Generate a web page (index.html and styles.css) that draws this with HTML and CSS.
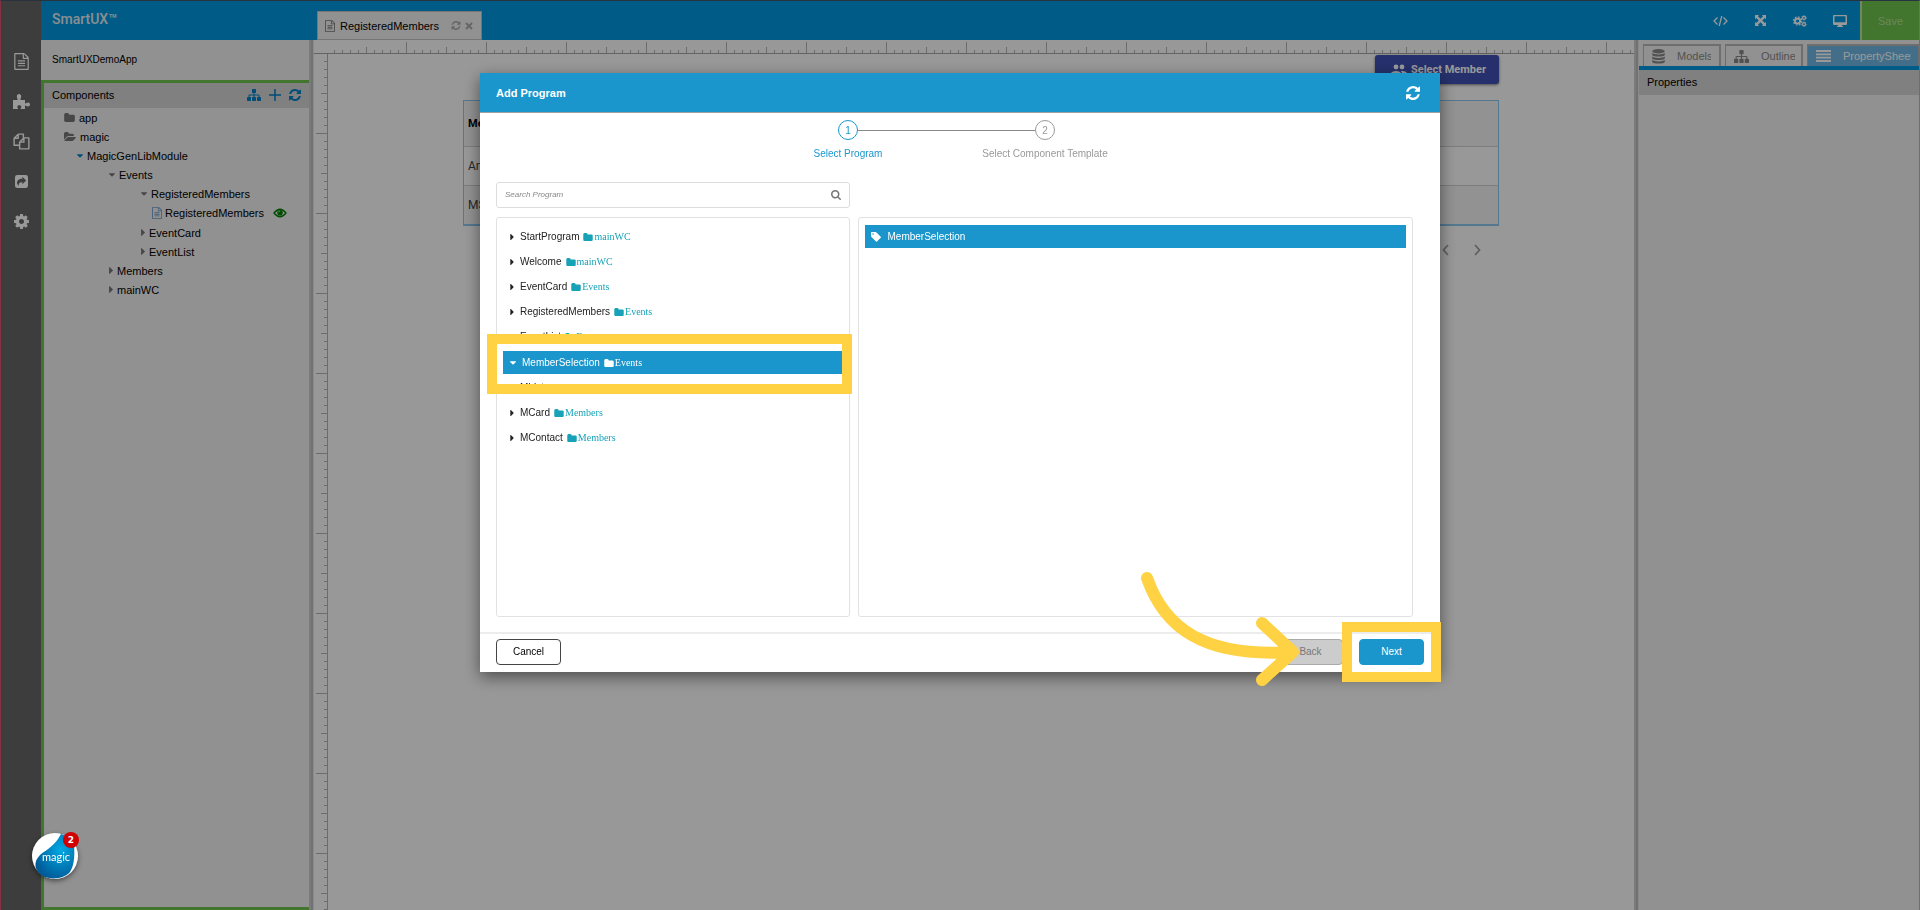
FILE: index.html
```html
<!DOCTYPE html>
<html lang="en">
<head>
    <meta charset="UTF-8">
    <meta name="viewport" content="width=device-width, initial-scale=1.0">
    <title>SmartUX</title>
    <link rel="stylesheet" href="styles.css">
</head>
<body>
    <!-- icons -->
    <svg class="sprite" aria-hidden="true">
        <symbol id="i-refresh" viewBox="128 128 1536 1536"><path d="M1639 1056q0 5-1 7-64 268-268 434.5t-478 166.5q-146 0-282.500-55t-243.500-157l-129 129q-19 19-45 19t-45-19-19-45v-448q0-26 19-45t45-19h448q26 0 45 19t19 45-19 45l-137 137q71 66 161 102t187 36q134 0 250-65t186-179q11-17 53-117 8-23 30-23h192q13 0 22.500 9.500t9.500 22.500zm25-800v448q0 26-19 45t-45 19h-448q-26 0-45-19t-19-45 19-45l138-138q-148-137-349-137-134 0-250 65t-186 179q-11 17-53 117-8 23-30 23h-199q-13 0-22.500-9.500t-9.500-22.500v-7q65-268 270-434.500t480-166.500q146 0 284 55.500t245 156.500l130-129q19-19 45-19t45 19 19 45z"/></symbol>
        <symbol id="i-right" viewBox="576 384 576 1024"><path d="M1152 896q0 26-19 45l-448 448q-19 19-45 19t-45-19-19-45v-896q0-26 19-45t45-19 45 19l448 448q19 19 19 45z"/></symbol>
        <symbol id="i-down" viewBox="384 640 1024 576"><path d="M1408 704q0 26-19 45l-448 448q-19 19-45 19t-45-19l-448-448q-19-19-19-45t19-45 45-19h896q26 0 45 19t19 45z"/></symbol>
        <symbol id="i-folder" viewBox="64 128 1664 1408"><path d="M1728 608v704q0 92-66 158t-158 66h-1216q-92 0-158-66t-66-158v-960q0-92 66-158t158-66h320q92 0 158 66t66 158v32h672q92 0 158 66t66 158z"/></symbol>
        <symbol id="i-folder-open" viewBox="0 128 1880 1408"><path d="M1879 952q0 31-31 66l-336 396q-43 51-120.500 86.500t-143.500 35.500h-1088q-34 0-60.500-13t-26.500-43q0-31 31-66l336-396q43-51 120.500-86.500t143.500-35.500h1088q34 0 60.500 13t26.500 43zm-343-344v160h-832q-94 0-197 47.500t-164 119.500l-337 396-5 6q0-4-.5-12.500t-.5-12.500v-960q0-92 66-158t158-66h320q92 0 158 66t66 158v32h544q92 0 158 66t66 158z"/></symbol>
        <symbol id="i-search" viewBox="64 128 1664 1664"><path d="M1216 832q0-185-131.500-316.500t-316.500-131.500-316.500 131.500-131.500 316.500 131.500 316.500 316.500 131.500 316.500-131.500 131.500-316.500zm512 832q0 52-38 90t-90 38q-54 0-90-38l-343-342q-179 124-399 124-143 0-273.500-55.500t-225-150-150-225-55.500-273.500 55.500-273.500 150-225 225-150 273.500-55.500 273.500 55.500 225 150 150 225 55.500 273.500q0 220-124 399l343 343q37 37 37 90z"/></symbol>
        <symbol id="i-file" viewBox="128 0 1536 1792"><path d="M1596 380q28 28 48 76t20 88v1152q0 40-28 68t-68 28h-1344q-40 0-68-28t-28-68v-1600q0-40 28-68t68-28h896q40 0 88 20t76 48zm-444-244v376h376q-10-29-22-41l-313-313q-12-12-41-22zm384 1528v-1024h-416q-40 0-68-28t-28-68v-416h-768v1536h1280zm-1024-864q0-14 9-23t23-9h704q14 0 23 9t9 23v64q0 14-9 23t-23 9h-704q-14 0-23-9t-9-23v-64zm736 224q14 0 23 9t9 23v64q0 14-9 23t-23 9h-704q-14 0-23-9t-9-23v-64q0-14 9-23t23-9h704zm0 256q14 0 23 9t9 23v64q0 14-9 23t-23 9h-704q-14 0-23-9t-9-23v-64q0-14 9-23t23-9h704z"/></symbol>
        <symbol id="i-cog" viewBox="128 128 1536 1536"><path d="M1152 896q0-106-75-181t-181-75-181 75-75 181 75 181 181 75 181-75 75-181zm512-109v222q0 12-8 23t-20 13l-185 28q-19 54-39 91 35 50 107 138 10 12 10 25t-9 23q-27 37-99 108t-94 71q-12 0-26-9l-138-108q-44 23-91 38-16 136-29 186-7 28-36 28h-222q-14 0-24.500-8.500t-11.500-21.500l-28-184q-49-16-90-37l-141 107q-10 9-25 9-14 0-25-11-126-114-165-168-7-10-7-23 0-12 8-23 15-21 51-66.500t54-70.500q-27-50-41-99l-183-27q-13-2-21-12.500t-8-23.500v-222q0-12 8-23t19-13l186-28q14-46 39-92-40-57-107-138-10-12-10-24 0-10 9-23 26-36 98.500-107.500t94.500-71.500q13 0 26 10l138 107q44-23 91-38 16-136 29-186 7-28 36-28h222q14 0 24.500 8.500t11.500 21.500l28 184q49 16 90 37l142-107q9-9 24-9 13 0 25 10 129 119 165 170 7 8 7 22 0 12-8 23-15 21-51 66.500t-54 70.500q26 50 41 98l183 28q13 2 21 12.500t8 23.500z"/></symbol>
        <symbol id="i-sitemap" viewBox="0 128 1792 1536"><path d="M1792 1248v320q0 40-28 68t-68 28h-320q-40 0-68-28t-28-68v-320q0-40 28-68t68-28h96v-192h-512v192h96q40 0 68 28t28 68v320q0 40-28 68t-68 28h-320q-40 0-68-28t-28-68v-320q0-40 28-68t68-28h96v-192h-512v192h96q40 0 68 28t28 68v320q0 40-28 68t-68 28h-320q-40 0-68-28t-28-68v-320q0-40 28-68t68-28h96v-192q0-52 38-90t90-38h512v-192h-96q-40 0-68-28t-28-68v-320q0-40 28-68t68-28h320q40 0 68 28t28 68v320q0 40-28 68t-68 28h-96v192h512q52 0 90 38t38 90v192h96q40 0 68 28t28 68z"/></symbol>
        <symbol id="i-puzzle" viewBox="0 0 18 16"><path d="M1 7h4.500C6 6 4.800 5.300 4.800 3.600 4.800 2 5.700 1 7 1s2.200 1 2.200 2.600C9.200 5.300 8 6 8.500 7H13v3.400c.8.500 1.500-.9 3-.9 1.200 0 2 .8 2 2s-.8 2-2 2c-1.500 0-2.200-1.300-3-.9V16H8.600c-.4-.8.700-1.200.7-2.300 0-.9-.8-1.500-2-1.500s-2 .6-2 1.500c0 1.100 1.100 1.500.7 2.300H1z"/></symbol>
        <symbol id="i-copy" viewBox="0 0 18 18"><path d="M5.500 1.200H11V5M5.500 1.200L1.200 5.500V13H6.500M5.500 1.200V5.500H1.200M11.500 5.200H16.800V16.800H7V9.700L11.500 5.200V9.700H7" fill="none" stroke="currentColor" stroke-width="1.500" stroke-linejoin="round"/></symbol>
        <symbol id="i-share" viewBox="0 0 14 14"><path fill-rule="evenodd" d="M2.500 0h9A2.500 2.500 0 0 1 14 2.500v9a2.500 2.500 0 0 1-2.500 2.500h-9A2.500 2.500 0 0 1 0 11.500v-9A2.500 2.500 0 0 1 2.500 0zM8 2v2C4 4 2 6 2.200 8.700c.1 1.300.8 2.300 1.800 3C3.500 9 5 7.800 8 7.800V10l4-4z"/></symbol>
        <symbol id="i-plus" viewBox="0 0 12 12"><path d="M6 0v12M0 6h12" stroke="currentColor" stroke-width="1.500"/></symbol>
        <symbol id="i-eye" viewBox="0 0 14 10"><path d="M1 5Q7-2.500 13 5 7 12.500 1 5z" fill="none" stroke="currentColor" stroke-width="1.300"/><circle cx="7" cy="4.700" r="2.800"/><path d="M5.600 4.500A1.500 1.500 0 0 1 7 3" fill="none" stroke="#fff" stroke-width=".7"/></symbol>
        <symbol id="i-close" viewBox="0 0 8 8"><path d="M1 1l6 6M7 1L1 7" stroke="currentColor" stroke-width="2"/></symbol>
        <symbol id="i-code" viewBox="0 0 15 12"><path d="M4.500 2.500L1 6l3.500 3.500M10.500 2.500L14 6l-3.500 3.500M8.800 1L6.200 11" fill="none" stroke="currentColor" stroke-width="1.300"/></symbol>
        <symbol id="i-expand" viewBox="0 0 12 12"><path d="M0 0h4.500L3.200 1.300 6 4.100l2.800-2.800L7.500 0H12v4.500l-1.300-1.300L7.900 6l2.800 2.800L12 7.500V12H7.500l1.300-1.300L6 7.900l-2.800 2.800L4.500 12H0V7.500l1.300 1.300L4.100 6 1.300 3.200 0 4.500z"/></symbol>
        <symbol id="i-cogs" viewBox="0 0 14 12"><g fill="none" stroke="currentColor"><circle cx="4.600" cy="6" r="2.600" stroke-width="2"/><circle cx="4.600" cy="6" r="4.100" stroke-width="1.200" stroke-dasharray="1.700 1.500"/><circle cx="11" cy="2.800" r="1.500" stroke-width="1.300"/><circle cx="11" cy="2.800" r="2.400" stroke-width=".8" stroke-dasharray="1 .9"/><circle cx="11" cy="9.200" r="1.500" stroke-width="1.300"/><circle cx="11" cy="9.200" r="2.400" stroke-width=".8" stroke-dasharray="1 .9"/></g></symbol>
        <symbol id="i-desktop" viewBox="0 0 14 12"><path fill-rule="evenodd" d="M1 0h12a1 1 0 0 1 1 1v8a1 1 0 0 1-1 1H9v1h1v1H4v-1h1v-1H1a1 1 0 0 1-1-1V1a1 1 0 0 1 1-1zm.5 1.300V7.300h11v-6z"/></symbol>
        <symbol id="i-users" viewBox="0 0 16 12"><circle cx="5" cy="3" r="2.400"/><circle cx="11" cy="3" r="2.400"/><path d="M0 12V9.500C0 8 2.500 7 5 7s5 1 5 2.500V12zM11 12V9.500c0-.9-.5-1.700-1.200-2.300 3-.5 6.200.6 6.200 2.300V12z"/></symbol>
        <symbol id="i-database" viewBox="0 0 13 15"><ellipse cx="6.500" cy="2.300" rx="6.300" ry="2.200"/><path d="M.2 4.100C1.500 5.900 11.500 5.900 12.800 4.100V6C11.800 8.100 1.200 8.100.2 6zM.2 7.600C1.500 9.400 11.500 9.400 12.800 7.600v1.900C11.800 11.600 1.200 11.600.2 9.500zM.2 11.100c1.300 1.800 11.300 1.800 12.600 0V13C11.800 15.100 1.200 15.100.2 13z"/></symbol>
        <symbol id="i-list" viewBox="0 0 15 12"><path d="M0 1h15M0 4.300h15M0 7.700h15M0 11h15" stroke="currentColor" stroke-width="1.800"/></symbol>
        <symbol id="i-tag" viewBox="0 0 10 10"><path fill-rule="evenodd" d="M.8 0H4.500q.5 0 1 .5L9.700 4.700q.5.500 0 1L6 9.500q-.5.500-1 0L.5 5Q0 4.500 0 4V.8Q0 0 .8 0zM2 1.200a.8.8 0 1 0 .1 1.600A.8.8 0 0 0 2 1.200z"/></symbol>
        <symbol id="i-prev" viewBox="0 0 7 12"><path d="M6 1L1.500 6 6 11" fill="none" stroke="currentColor" stroke-width="1.800"/></symbol>
        <symbol id="i-next" viewBox="0 0 7 12"><path d="M1 1l4.500 5L1 11" fill="none" stroke="currentColor" stroke-width="1.800"/></symbol>
    </svg>

    <div class="page">
        <nav class="rail">
            <button class="rail-btn" aria-label="Pages"><svg width="15" height="17"><use href="#i-file"/></svg></button>
            <button class="rail-btn" aria-label="Components"><svg width="18" height="16"><use href="#i-puzzle"/></svg></button>
            <button class="rail-btn" aria-label="Templates"><svg width="17" height="17"><use href="#i-copy"/></svg></button>
            <button class="rail-btn" aria-label="Export"><svg width="13" height="13"><use href="#i-share"/></svg></button>
            <button class="rail-btn" aria-label="Settings"><svg width="15" height="15"><use href="#i-cog"/></svg></button>
        </nav>

        <div class="main">
            <header class="topbar">
                <h1 class="brand">SmartUX™</h1>
                <div class="file-tab">
                    <svg width="10" height="12"><use href="#i-file"/></svg>
                    <span class="file-name">RegisteredMembers</span>
                    <button class="file-btn" aria-label="Reload"><svg width="10" height="9"><use href="#i-refresh"/></svg></button>
                    <button class="file-btn" aria-label="Close"><svg width="8" height="8"><use href="#i-close"/></svg></button>
                </div>
                <div class="tools">
                    <button class="tool" aria-label="Code"><svg width="15" height="12"><use href="#i-code"/></svg></button>
                    <button class="tool" aria-label="Full screen"><svg width="11" height="11"><use href="#i-expand"/></svg></button>
                    <button class="tool" aria-label="Options"><svg width="14" height="12"><use href="#i-cogs"/></svg></button>
                    <button class="tool" aria-label="Preview"><svg width="14" height="12"><use href="#i-desktop"/></svg></button>
                </div>
                <button class="save">Save</button>
            </header>

            <div class="columns">
                <aside class="sidebar">
                    <div class="app-name">SmartUXDemoApp</div>
                    <section class="components">
                        <div class="panel-head">
                            <h2>Components</h2>
                            <div class="head-actions">
                                <button aria-label="Tree"><svg width="14" height="12"><use href="#i-sitemap"/></svg></button>
                                <button aria-label="Add"><svg width="12" height="12"><use href="#i-plus"/></svg></button>
                                <button aria-label="Refresh"><svg width="12" height="12"><use href="#i-refresh"/></svg></button>
                            </div>
                        </div>
                        <ul class="tree">
                            <li><div class="node"><svg class="dim" width="11" height="9"><use href="#i-folder"/></svg>app</div></li>
                            <li>
                                <div class="node"><svg class="dim" width="12" height="9"><use href="#i-folder-open"/></svg>magic</div>
                                <ul class="level-module">
                                    <li>
                                        <div class="node"><svg class="blue" width="6" height="4"><use href="#i-down"/></svg>MagicGenLibModule</div>
                                        <ul>
                                            <li>
                                                <div class="node"><svg class="dim" width="6" height="4"><use href="#i-down"/></svg>Events</div>
                                                <ul>
                                                    <li>
                                                        <div class="node"><svg class="dim" width="6" height="4"><use href="#i-down"/></svg>RegisteredMembers</div>
                                                        <ul class="level-file">
                                                            <li><div class="node file"><svg class="page-icon" width="10" height="12"><use href="#i-file"/></svg>RegisteredMembers<svg class="eye" width="14" height="10"><use href="#i-eye"/></svg></div></li>
                                                        </ul>
                                                    </li>
                                                    <li><div class="node"><svg class="dim" width="4" height="7"><use href="#i-right"/></svg>EventCard</div></li>
                                                    <li><div class="node"><svg class="dim" width="4" height="7"><use href="#i-right"/></svg>EventList</div></li>
                                                </ul>
                                            </li>
                                            <li><div class="node"><svg class="dim" width="4" height="7"><use href="#i-right"/></svg>Members</div></li>
                                            <li><div class="node"><svg class="dim" width="4" height="7"><use href="#i-right"/></svg>mainWC</div></li>
                                        </ul>
                                    </li>
                                </ul>
                            </li>
                        </ul>
                    </section>
                </aside>

                <div class="splitter"></div>

                <main class="workspace">
                    <div class="ruler-corner"></div>
                    <div class="ruler-x"></div>
                    <div class="ruler-y"></div>
                    <div class="canvas">
                        <button class="select-member"><svg width="16" height="12"><use href="#i-users"/></svg>Select Member</button>
                        <table class="members">
                            <thead><tr><th>Member Name</th><th></th></tr></thead>
                            <tbody>
                                <tr><td>Angular</td><td></td></tr>
                                <tr><td>MSE</td><td></td></tr>
                            </tbody>
                        </table>
                        <div class="pager">
                            <button aria-label="Previous page"><svg width="7" height="12"><use href="#i-prev"/></svg></button>
                            <button aria-label="Next page"><svg width="7" height="12"><use href="#i-next"/></svg></button>
                        </div>
                    </div>
                </main>

                <div class="splitter"></div>

                <aside class="props">
                    <div class="prop-tabs">
                        <button class="prop-tab"><svg width="13" height="15"><use href="#i-database"/></svg><span>Models</span></button>
                        <button class="prop-tab"><svg width="15" height="13"><use href="#i-sitemap"/></svg><span>Outline</span></button>
                        <button class="prop-tab active"><svg width="15" height="12"><use href="#i-list"/></svg><span>PropertySheet</span></button>
                    </div>
                    <div class="panel-head"><h2>Properties</h2></div>
                </aside>
            </div>
        </div>
    </div>

    <!-- Add Program -->
    <div class="overlay">
        <div class="modal" role="dialog" aria-labelledby="modal-title">
            <div class="modal-head">
                <h2 id="modal-title">Add Program</h2>
                <button aria-label="Refresh"><svg width="14" height="14"><use href="#i-refresh"/></svg></button>
            </div>
            <ol class="steps">
                <li class="step current">
                    <div class="step-row"><i class="line hide"></i><span class="num">1</span><i class="line"></i></div>
                    <span class="step-label">Select Program</span>
                </li>
                <li class="step">
                    <div class="step-row"><i class="line"></i><span class="num">2</span><i class="line hide"></i></div>
                    <span class="step-label">Select Component Template</span>
                </li>
            </ol>
            <div class="modal-body">
                <div class="search">
                    <input type="text" placeholder="Search Program" aria-label="Search Program">
                    <svg width="10" height="10"><use href="#i-search"/></svg>
                </div>
                <ul class="box programs">
                    <li class="program"><svg class="caret" width="4" height="6"><use href="#i-right"/></svg>StartProgram<span class="tag"><svg width="10" height="8"><use href="#i-folder"/></svg>mainWC</span></li>
                    <li class="program"><svg class="caret" width="4" height="6"><use href="#i-right"/></svg>Welcome<span class="tag"><svg width="10" height="8"><use href="#i-folder"/></svg>mainWC</span></li>
                    <li class="program"><svg class="caret" width="4" height="6"><use href="#i-right"/></svg>EventCard<span class="tag"><svg width="10" height="8"><use href="#i-folder"/></svg>Events</span></li>
                    <li class="program"><svg class="caret" width="4" height="6"><use href="#i-right"/></svg>RegisteredMembers<span class="tag"><svg width="10" height="8"><use href="#i-folder"/></svg>Events</span></li>
                    <li class="program"><svg class="caret" width="4" height="6"><use href="#i-right"/></svg>EventList<span class="tag"><svg width="10" height="8"><use href="#i-folder"/></svg>Events</span></li>
                    <li class="program selected"><svg class="caret" width="6" height="4"><use href="#i-down"/></svg>MemberSelection<span class="tag"><svg width="10" height="8"><use href="#i-folder"/></svg>Events</span><span class="highlight"></span></li>
                    <li class="program"><svg class="caret" width="4" height="6"><use href="#i-right"/></svg>MList<span class="tag"><svg width="10" height="8"><use href="#i-folder"/></svg>Members</span></li>
                    <li class="program"><svg class="caret" width="4" height="6"><use href="#i-right"/></svg>MCard<span class="tag"><svg width="10" height="8"><use href="#i-folder"/></svg>Members</span></li>
                    <li class="program"><svg class="caret" width="4" height="6"><use href="#i-right"/></svg>MContact<span class="tag"><svg width="10" height="8"><use href="#i-folder"/></svg>Members</span></li>
                </ul>
                <ul class="box result">
                    <li class="result-item"><svg width="10" height="10"><use href="#i-tag"/></svg>MemberSelection</li>
                </ul>
            </div>
            <div class="modal-foot">
                <button class="btn cancel">Cancel</button>
                <div class="back-wrap">
                    <button class="btn back" disabled>Back</button>
                    <svg class="arrow" width="166" height="118" viewBox="0 0 166 118"><path d="M12 10C29 59 68 90 158 84M127 55L158 84 127 112" fill="none" stroke="#ffd243" stroke-width="12" stroke-linecap="round" stroke-linejoin="round"/></svg>
                </div>
                <div class="next-wrap">
                    <button class="btn next">Next</button>
                    <span class="highlight"></span>
                </div>
            </div>
        </div>
    </div>

    <button class="magic" aria-label="Magic help">
        <svg width="46" height="46" viewBox="0 0 46 46">
            <defs>
                <radialGradient id="drop" cx=".65" cy=".35" r=".7"><stop offset="0" stop-color="#00a9e4"/><stop offset="1" stop-color="#005b98"/></radialGradient>
            </defs>
            <circle cx="23" cy="23" r="23" fill="#fff"/>
            <path d="M29 1C23 13 15 16 8 22 0 30 3 40 13 44c9 3 20 1 25-5C44 30 42 15 42 8L37 4z" fill="url(#drop)"/>
            <text x="10" y="28" fill="#fff" font-family="Lato, sans-serif" font-size="11">magic</text>
        </svg>
        <span class="count">2</span>
    </button>
</body>
</html>
```
FILE: styles.css
```css
*{
    padding: 0;
    margin: 0;
    list-style: none;
    box-sizing: border-box;
}
html, body{
    width: 100%;
    height: 100%;
    overflow: hidden;
}
body{
    font: 11px/14px "Liberation Sans", Arial, sans-serif;
    color: #000;
}
button{
    border: 0;
    background: none;
    font: inherit;
    color: inherit;
}
svg{
    display: block;
    flex: none;
    fill: currentColor;
}
.sprite{
    position: absolute;
    width: 0;
    height: 0;
}

.page{
    display: flex;
    height: 100%;
    border: 1px solid #e0506e;
    border-top-color: #456;
    border-right-color: #b4b0e8;
    border-bottom: 0;
}
.rail{
    width: 40px;
    flex: none;
    padding-top: 40px;
    background: #666;
    color: #fff;
}
.rail-btn{
    display: flex;
    width: 100%;
    height: 40px;
    align-items: center;
    justify-content: center;
}
.main{
    flex: 1;
    min-width: 0;
    display: flex;
    flex-direction: column;
}

/* top bar */
.topbar{
    display: flex;
    height: 39px;
    flex: none;
    background: #0098e1;
    color: #fff;
}
.brand{
    width: 276px;
    padding-left: 11px;
    font: 500 14px/36px Roboto, sans-serif;
    color: #e4eef4;
}
.file-tab{
    display: flex;
    align-items: center;
    align-self: flex-end;
    gap: 4px;
    height: 29px;
    padding: 0 8px 0 7px;
    border: 1px solid #c4c4c4;
    background: #f2f2f2;
    color: #777;
}
.file-name{
    padding: 0 8px 0 1px;
    color: #000;
}
.file-btn{
    color: #aaa;
}
.tools{
    display: flex;
    margin-left: auto;
}
.tool{
    display: flex;
    width: 40px;
    align-items: center;
    justify-content: center;
}
.save{
    width: 59px;
    border-left: 2px solid #bfe0a8;
    background: #6ec34b;
    color: #b4e29c;
}

.columns{
    flex: 1;
    min-height: 0;
    display: flex;
}
.splitter{
    width: 5px;
    flex: none;
    border-right: 1px solid #e8e8e8;
    background: linear-gradient(90deg, #cdcdcd 2px, #bdbdbd 2px);
}

/* left panel */
.sidebar{
    width: 268px;
    flex: none;
    display: flex;
    flex-direction: column;
    background: #f2f2f2;
}
.app-name{
    height: 40px;
    padding-left: 11px;
    font-size: 10px;
    line-height: 40px;
}
.components{
    flex: 1;
    border: 3px solid #6ec34b;
    border-right: 0;
}
.panel-head{
    display: flex;
    align-items: center;
    justify-content: space-between;
    height: 25px;
    padding: 0 8px 1px;
    background: #d5d5d5;
}
.panel-head h2{
    font-size: 11px;
    font-weight: 400;
}
.head-actions{
    display: flex;
    gap: 8px;
    color: #0080c8;
}
.tree{
    padding-left: 20px;
}
.tree ul{
    padding-left: 32px;
}
.tree .level-module{
    padding-left: 13px;
}
.tree .level-file{
    padding-left: 11px;
}
.node{
    display: flex;
    align-items: center;
    gap: 4px;
    height: 19px;
}
.node.file{
    gap: 3px;
    height: 20px;
}
.dim{
    color: #777;
}
.blue{
    color: #0080c8;
}
.page-icon{
    color: #6a9ac8;
}
.eye{
    margin-left: 6px;
    color: #008000;
}

/* canvas with rulers */
.workspace{
    flex: 1;
    min-width: 0;
    display: grid;
    grid-template: 14px 1fr / 14px 1fr;
    background: #fefefe;
}
.ruler-corner{
    border-bottom: 1px solid #a5a5a5;
}
.ruler-x{
    border-bottom: 1px solid #a5a5a5;
    background:
        repeating-linear-gradient(90deg, transparent 0 78px, #b5b5b5 78px 79px, transparent 79px 80px) 0 100% / 100% 11px no-repeat,
        repeating-linear-gradient(90deg, transparent 0 38px, #b5b5b5 38px 39px, transparent 39px 40px) 0 100% / 100% 6px no-repeat,
        repeating-linear-gradient(90deg, transparent 0 6px, #b5b5b5 6px 7px, transparent 7px 8px) 0 100% / 100% 3px no-repeat;
}
.ruler-y{
    border-right: 1px solid #b5b5b5;
    background:
        repeating-linear-gradient(180deg, transparent 0 79px, #b5b5b5 79px 80px) 100% 0 / 11px 100% no-repeat,
        repeating-linear-gradient(180deg, transparent 0 39px, #b5b5b5 39px 40px) 100% 0 / 6px 100% no-repeat,
        repeating-linear-gradient(180deg, transparent 0 7px, #b5b5b5 7px 8px) 100% 0 / 3px 100% no-repeat;
}
.canvas{
    display: flex;
    flex-direction: column;
    padding: 1px 135px;
}
.select-member{
    display: flex;
    align-items: center;
    align-self: flex-end;
    gap: 4px;
    height: 29px;
    padding: 0 13px 0 16px;
    border-radius: 3px;
    background: #3f51b5;
    box-shadow: 0 1px 3px rgba(0, 0, 0, .5);
    font: 700 11px/29px Roboto, sans-serif;
    color: #fff;
}
.members{
    width: 100%;
    margin-top: 16px;
    border: 1px solid #8cc8f0;
    border-bottom-width: 2px;
    border-collapse: separate;
    border-spacing: 0;
    font: 12px/14px Roboto, sans-serif;
    color: #444;
}
.members th, .members td{
    height: 39px;
    padding: 0 4px;
    border-bottom: 1px solid #d0d0d0;
    text-align: left;
}
.members th{
    height: 46px;
    background: #f3f3f3;
    font-size: 11px;
    color: #000;
}
.members tr:last-child td{
    height: 38px;
    border-bottom: 0;
    background: #f3f3f3;
}
.pager{
    display: flex;
    align-self: flex-end;
    gap: 25px;
    padding: 18px 18px 0 0;
    color: #a0a0a0;
}

/* right panel */
.props{
    width: 280px;
    flex: none;
    background: #f2f2f2;
}
.prop-tabs{
    display: flex;
    gap: 4px;
    padding: 4px 0 0 4px;
    border-bottom: 4px solid #0098e1;
    overflow: hidden;
}
.prop-tab{
    display: flex;
    align-items: center;
    gap: 12px;
    width: 78px;
    height: 22px;
    flex: none;
    padding-left: 8px;
    border: 1px solid #b8b8b8;
    border-width: 2px 2px 0 1px;
    color: #888;
}
.prop-tab span{
    width: 34px;
    overflow: hidden;
    text-align: left;
}
.prop-tab.active{
    width: 113px;
    background: #70b8e4;
    color: #fff;
}
.prop-tab.active span{
    width: 68px;
}

/* modal */
.overlay{
    position: fixed;
    top: 0;
    right: 0;
    bottom: 0;
    left: 0;
    display: flex;
    align-items: flex-start;
    justify-content: center;
    padding-top: 73px;
    background: rgba(0, 0, 0, .4);
}
.modal{
    width: 50%;
    background: #fff;
    box-shadow: 0 5px 15px rgba(0, 0, 0, .5);
    font-size: 10px;
    line-height: 12px;
}
.modal-head{
    display: flex;
    align-items: center;
    justify-content: space-between;
    height: 40px;
    padding: 0 20px 0 16px;
    border-bottom: 1px solid #a0a0a0;
    background: #1a96cd;
    color: #fff;
}
.modal-head h2{
    font-size: 11px;
}
.steps{
    display: flex;
    justify-content: center;
    padding: 7px 27px 0 0;
    color: #999;
}
.step{
    width: 197px;
    text-align: center;
}
.step-row{
    display: flex;
    align-items: center;
    margin-bottom: 8px;
}
.line{
    flex: 1;
    height: 1px;
    background: #8a8a8a;
}
.line.hide{
    visibility: hidden;
}
.num{
    width: 20px;
    height: 20px;
    border: 1px solid;
    border-radius: 50%;
    line-height: 20px;
}
.current .num, .current .step-label{
    color: #1a96cd;
}
.modal-body{
    display: grid;
    grid-template-columns: 7fr 11fr;
    gap: 9px 8px;
    padding: 22px 27px 15px 16px;
}
.search{
    grid-column: 1 / 2;
    display: flex;
    align-items: center;
    height: 26px;
    padding: 0 8px;
    border: 1px solid #ddd;
    border-radius: 3px;
    color: #777;
}
.search input{
    flex: 1;
    min-width: 0;
    border: 0;
    outline: 0;
    font: italic 8px/12px "Liberation Sans", Arial, sans-serif;
}
.search input::placeholder{
    color: #888;
}
.box{
    height: 400px;
    padding: 7px 6px;
    border: 1px solid #e2e2e2;
    border-radius: 3px;
}
.programs{
    grid-column: 1 / 2;
}
.program{
    position: relative;
    display: flex;
    align-items: center;
    height: 23px;
    margin-bottom: 2px;
    padding-left: 7px;
    color: #222;
}
.caret{
    margin-right: 6px;
}
.tag{
    display: flex;
    align-items: center;
    gap: 1px;
    margin-left: 4px;
    font-family: "Liberation Serif", "Times New Roman", serif;
    color: #17a2b8;
}
.program.selected{
    z-index: 1;
    margin-top: 3px;
    background: #1a96cd;
    color: #fff;
}
.selected .tag{
    color: #fff;
}
/* yellow frame round the control to use */
.highlight{
    position: absolute;
    top: -17px;
    right: -17px;
    bottom: -17px;
    left: -17px;
    border: 10px solid #ffd243;
}
.selected .highlight{
    right: -9px;
    bottom: -20px;
    left: -16px;
}
.result-item{
    display: flex;
    align-items: center;
    gap: 7px;
    height: 23px;
    padding-left: 6px;
    background: #1a96cd;
    color: #fff;
}
.modal-foot{
    display: flex;
    align-items: center;
    gap: 16px;
    height: 40px;
    padding: 0 16px 2px;
    border-top: 2px solid #ececec;
}
.btn{
    display: block;
    width: 65px;
    height: 26px;
    border: 1px solid #444;
    border-radius: 4px;
}
.back-wrap, .next-wrap{
    position: relative;
}
.back-wrap{
    margin-left: auto;
}
.back{
    border-color: #aaa;
    background: #ccc;
    color: #777;
}
.arrow{
    position: absolute;
    right: 42px;
    bottom: -21px;
}
.next{
    border-color: #1a96cd;
    background: #1a96cd;
    color: #fff;
}

.magic{
    position: fixed;
    bottom: 31px;
    left: 32px;
    border-radius: 50%;
    box-shadow: 0 2px 5px rgba(0, 0, 0, .5);
}
.count{
    position: absolute;
    top: -1px;
    right: -1px;
    width: 16px;
    height: 16px;
    border-radius: 50%;
    background: #d00000;
    font: 700 9px/16px "DejaVu Sans", sans-serif;
    color: #fff;
}
```
